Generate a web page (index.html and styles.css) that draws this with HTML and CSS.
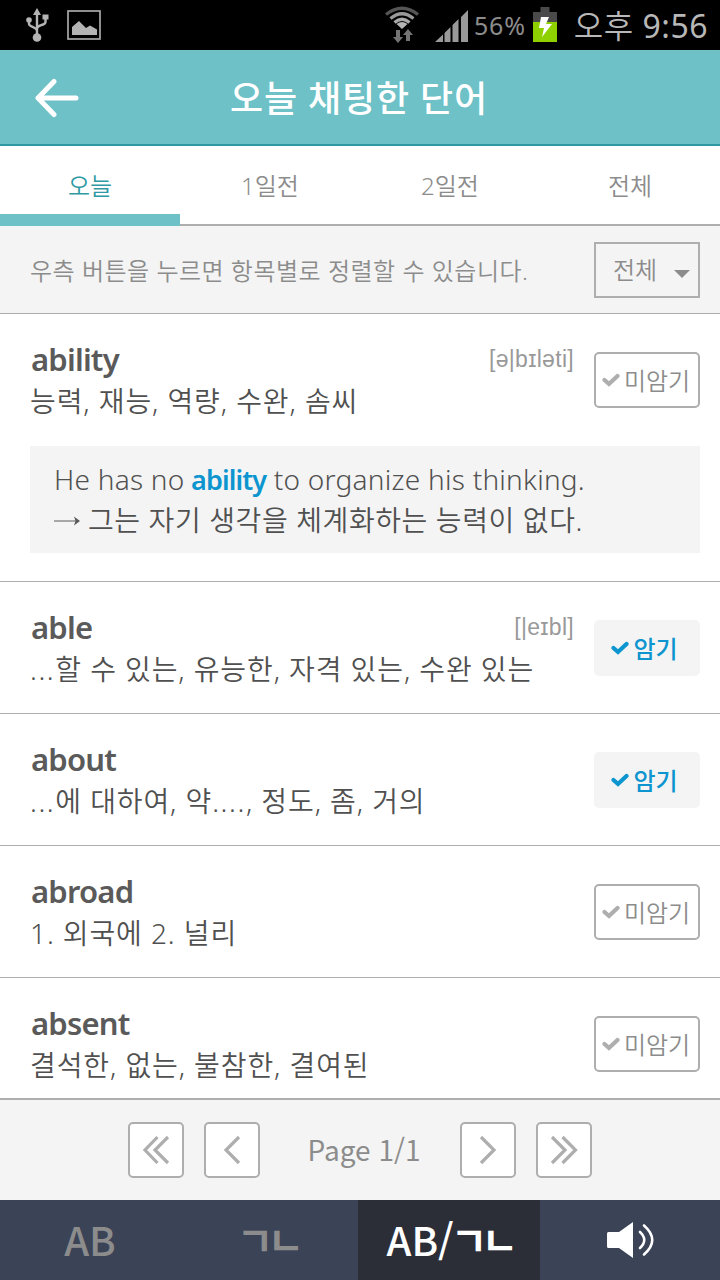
FILE: index.html
```html
<!DOCTYPE html>
<html lang="ko">
<head>
    <meta charset="UTF-8">
    <title>오늘 채팅한 단어</title>
    <link rel="stylesheet" href="styles.css">
</head>
<body>
    <svg class="defs" width="0" height="0">
        <symbol id="check" viewBox="0 0 18 14">
            <path d="M2.5 7 L7 11 L15.5 3" fill="none" stroke="currentColor" stroke-width="4.2" stroke-linecap="round"/>
        </symbol>
    </svg>

    <div class="status-bar">
        <svg class="usb" width="24" height="36" viewBox="0 0 24 36">
            <g fill="none" stroke="#b4b4b4" stroke-width="2.400">
                <path d="M12 6v24M4 13v4c0 3 8 3 8 7M20.500 11v4c0 4-8.500 2-8.500 7"/>
            </g>
            <path d="M12 1l4 7H8zM17.500 7.500h6v5h-6z" fill="#b4b4b4"/>
            <circle cx="4" cy="13" r="2.800" fill="#b4b4b4"/>
            <circle cx="12" cy="30.500" r="4.300" fill="#b4b4b4"/>
        </svg>
        <svg class="photo" width="34" height="30" viewBox="0 0 34 30">
            <rect x="1" y="1" width="32" height="28" fill="none" stroke="#a8a8a8" stroke-width="1.700"/>
            <path d="M5 25V17l7-6 7 7 4-2.500 7 4V25z" fill="#b4b4b4"/>
        </svg>
        <svg class="wifi" width="36" height="38" viewBox="0 0 36 38">
            <g fill="none" stroke-width="3.200">
                <path d="M2 8.500Q18-4 34 8.500" stroke="#555"/>
                <path d="M6.500 12.500Q18 3 29.500 12.500" stroke="#999"/>
                <path d="M10.500 16.500Q18 10 25.500 16.500" stroke="#aaa"/>
            </g>
            <path d="M12.500 18q5.500-4 11 0L18 23z" fill="#b4b4b4"/>
            <path d="M12 24h4v7h3l-5 6-5-6h3zM22 35h4v-6h3l-5-6-5 6h3z" fill="#747474"/>
        </svg>
        <svg class="signal" width="33" height="32" viewBox="0 0 33 32">
            <path d="M0 32L8 24.500V32zM9.500 23L15.500 17V32h-6zM17.500 15L23.500 9V32h-6zM26 7L33 0V32h-7z" fill="#999"/>
        </svg>
        <span class="percent">56%</span>
        <svg class="battery" width="24" height="36" viewBox="0 0 24 36">
            <path d="M7.500 0h9v5H24v11H0V5h7.500z" fill="#4a4a4a"/>
            <path d="M0 15h24v20H0z" fill="#8fd000"/>
            <path d="M8 10h8l-3 7h6L9 30l2-9H6z" fill="#fff"/>
        </svg>
        <span class="clock">오후 <span>9:56</span></span>
    </div>

    <header class="header">
        <svg class="back" width="44" height="40" viewBox="0 0 44 40">
            <path d="M19 3.500L3 20l16 16.500M4 20h37" fill="none" stroke="#fff" stroke-width="5" stroke-linecap="round" stroke-linejoin="round"/>
        </svg>
        <h1>오늘 채팅한 단어</h1>
    </header>

    <nav class="tabs">
        <a class="tab active">오늘</a>
        <a class="tab">1일전</a>
        <a class="tab">2일전</a>
        <a class="tab">전체</a>
    </nav>

    <div class="filter">
        <p>우측 버튼을 누르면 항목별로 정렬할 수 있습니다.</p>
        <div class="select">전체<span class="caret"></span></div>
    </div>

    <main class="list">
        <section class="item">
            <div class="row">
                <div class="text">
                    <div class="title"><h2>ability</h2><span class="phonetic">[ə|bɪləti]</span></div>
                    <p class="mean">능력, 재능, 역량, 수완, 솜씨</p>
                </div>
                <button class="memo"><svg width="18" height="14"><use href="#check"/></svg>미암기</button>
            </div>
            <div class="example">
                <p class="en">He has no <b>ability</b> to organize his thinking.</p>
                <p class="ko"><svg class="arrow" width="26" height="12" viewBox="0 0 26 12"><path d="M0 6h23" stroke="#5a5a5a" stroke-width="1"/><path d="M20 1.500L26 6l-6 4.500 1.500-4.500z" fill="#5a5a5a"/></svg>그는 자기 생각을 체계화하는 능력이 없다.</p>
            </div>
        </section>
        <section class="item">
            <div class="row">
                <div class="text">
                    <div class="title"><h2>able</h2><span class="phonetic">[|eɪbl]</span></div>
                    <p class="mean"><span class="dots">...</span>할 수 있는, 유능한, 자격 있는, 수완 있는</p>
                </div>
                <button class="memo done"><svg width="18" height="14"><use href="#check"/></svg>암기</button>
            </div>
        </section>
        <section class="item">
            <div class="row">
                <div class="text">
                    <div class="title"><h2>about</h2></div>
                    <p class="mean"><span class="dots">...</span>에 대하여, 약<span class="dots">....</span>, 정도, 좀, 거의</p>
                </div>
                <button class="memo done"><svg width="18" height="14"><use href="#check"/></svg>암기</button>
            </div>
        </section>
        <section class="item">
            <div class="row">
                <div class="text">
                    <div class="title"><h2>abroad</h2></div>
                    <p class="mean">1. 외국에 2. 널리</p>
                </div>
                <button class="memo"><svg width="18" height="14"><use href="#check"/></svg>미암기</button>
            </div>
        </section>
        <section class="item">
            <div class="row">
                <div class="text">
                    <div class="title"><h2>absent</h2></div>
                    <p class="mean">결석한, 없는, 불참한, 결여된</p>
                </div>
                <button class="memo"><svg width="18" height="14"><use href="#check"/></svg>미암기</button>
            </div>
        </section>
    </main>

    <div class="pager">
        <button><svg width="30" height="30" viewBox="0 0 30 30"><path d="M16.500 2L4 15l12.500 13M27 2L14 15l13 13"/></svg></button>
        <button><svg width="30" height="30" viewBox="0 0 30 30"><path d="M22 2L9 15l13 13"/></svg></button>
        <span class="page">Page 1/1</span>
        <button><svg width="30" height="30" viewBox="0 0 30 30"><path d="M8 2l13 13L8 28"/></svg></button>
        <button><svg width="30" height="30" viewBox="0 0 30 30"><path d="M3 2l13 13L3 28M13.500 2l13 13-13 13"/></svg></button>
    </div>

    <nav class="modes">
        <a>AB</a>
        <a><span class="jamo">ㄱㄴ</span></a>
        <a class="on">AB/<span class="jamo">ㄱㄴ</span></a>
        <a>
            <svg width="48" height="38" viewBox="0 0 48 38">
                <path d="M1.500 11H12L26 1v36L12 27H1.500Q0 27 0 25.500v-13Q0 11 1.500 11z" fill="#fff"/>
                <path d="M33 11q8.500 8 0 16M37 4.500q16.500 14.500 0 29" fill="none" stroke="#fff" stroke-width="2.600" stroke-linecap="round"/>
            </svg>
        </a>
    </nav>
</body>
</html>
```
FILE: styles.css
```css
* {
    box-sizing: border-box;
    margin: 0;
    padding: 0;
}
body {
    width: 720px;
    height: 1280px;
    overflow: hidden;
    display: flex;
    flex-direction: column;
    font-family: "Noto Sans", "Noto Sans CJK KR", sans-serif;
    font-weight: 350;
    background: #fff;
    color: #505050;
}
.defs {
    display: none;
}
button {
    font: inherit;
    background: #fff;
    border: 2px solid #aeaeae;
    border-radius: 5px;
}
/* 상태바 */
.status-bar {
    height: 50px;
    flex: none;
    display: flex;
    align-items: center;
    padding: 0 12px 0 25px;
    background: #000;
    color: #b8b8b8;
}
.photo {
    margin-left: 18px;
}
.wifi {
    margin-left: 283px;
}
.signal {
    margin-left: 15px;
    margin-top: 2px;
}
.percent {
    width: 53px;
    margin-left: 6px;
    font-size: 25px;
    font-weight: 400;
    letter-spacing: 0.8px;
    color: #8c8c8c;
}
.battery {
    margin-left: 6px;
}
.clock {
    margin-left: auto;
    padding-bottom: 3px;
    font-size: 32px;
    letter-spacing: 0.5px;
    white-space: nowrap;
}
.clock span {
    font-weight: 400;
}
/* 헤더 */
.header {
    height: 96px;
    flex: none;
    display: flex;
    align-items: center;
    padding: 2px 35px 0;
    background: #6dc1c7;
    border-bottom: 2px solid #2f9aa3;
    color: #fff;
}
.header h1 {
    flex: 1;
    margin-right: 46px;
    text-align: center;
    font-size: 36px;
    font-weight: 500;
    letter-spacing: 0.8px;
    line-height: 92px;
    padding-top: 2px;
}
.tabs {
    height: 80px;
    flex: none;
    display: flex;
}
.tab {
    flex: 1;
    border-bottom: 2px solid #aeaeae;
    text-align: center;
    font-size: 24px;
    line-height: 80px;
    color: #8c8c8c;
}
.tab.active {
    border-bottom: 12px solid #6dc1c7;
    color: #2f9aa3;
}
.filter {
    height: 88px;
    flex: none;
    display: flex;
    align-items: center;
    justify-content: space-between;
    padding: 0 20px 0 30px;
    background: #f4f4f4;
    border-bottom: 1px solid #aeaeae;
    font-size: 24px;
    color: #8c8c8c;
}
.filter p {
    letter-spacing: 0.5px;
}
.select {
    width: 106px;
    height: 56px;
    display: flex;
    align-items: center;
    justify-content: space-between;
    padding: 0 8px 0 17px;
    border: 2px solid #aeaeae;
    line-height: 52px;
}
.caret {
    margin-top: 8px;
    border: 8px solid transparent;
    border-top-color: #8c8c8c;
    border-bottom: 0;
}
/* 단어 목록 */
.list {
    flex: 1;
    min-height: 0;
    overflow: hidden;
}
.item {
    min-height: 132px;
    padding: 24px 20px 0 30px;
    border-bottom: 1px solid #aeaeae;
}
.row {
    display: flex;
}
.text {
    flex: 1;
    white-space: nowrap;
}
.title {
    display: flex;
    justify-content: space-between;
    height: 41px;
    line-height: 43px;
}
.title h2 {
    padding-left: 1px;
    font-size: 31px;
    font-weight: 600;
    letter-spacing: -0.8px;
    color: #5a5a5a;
}
.phonetic {
    font-family: "Liberation Sans", sans-serif;
    font-weight: 400;
    font-size: 23px;
    letter-spacing: 0.3px;
    line-height: 43px;
    color: #999;
}
.mean {
    font-size: 28px;
    line-height: 44px;
    letter-spacing: 0.9px;
}
.dots {
    letter-spacing: 1.6px;
}
.memo {
    width: 106px;
    height: 56px;
    flex: none;
    display: flex;
    align-items: center;
    justify-content: center;
    gap: 4px;
    margin: 14px 0 0 20px;
    padding: 0 2px 2px 0;
    font-size: 24px;
    color: #8c8c8c;
}
.memo svg {
    color: #aeaeae;
    margin-top: 2px;
}
.memo.done {
    padding-right: 5px;
    background: #f4f4f4;
    border-color: #f4f4f4;
    color: #0c95cf;
    font-weight: 500;
}
.memo.done svg {
    color: #0c95cf;
}
.example {
    height: 107px;
    margin: 23px 0 28px;
    padding: 13px 24px;
    background: #f4f4f4;
    font-size: 28px;
    line-height: 41px;
    white-space: nowrap;
}
.en {
    letter-spacing: 0.25px;
}
.ko {
    letter-spacing: 0.6px;
}
.example b {
    margin-left: -1px;
    font-size: 27px;
    font-weight: 600;
    line-height: 1;
    letter-spacing: -0.9px;
    color: #0c95cf;
}
.arrow {
    margin-right: 8px;
    vertical-align: 4px;
}
/* 하단 */
.pager {
    height: 102px;
    flex: none;
    display: flex;
    align-items: center;
    justify-content: center;
    gap: 20px;
    background: #f4f4f4;
    border-top: 2px solid #aeaeae;
}
.pager button {
    width: 56px;
    height: 56px;
    display: flex;
    align-items: center;
    justify-content: center;
}
.pager path {
    fill: none;
    stroke: #aeaeae;
    stroke-width: 3.2;
}
.page {
    width: 160px;
    margin-left: 4px;
    margin-right: -4px;
    padding-bottom: 2px;
    text-align: center;
    font-family: "Noto Sans CJK KR", sans-serif;
    font-size: 28px;
    font-weight: 400;
    color: #8c8c8c;
}
.modes {
    height: 80px;
    flex: none;
    display: grid;
    grid-template-columns: 179px 179px 182px 180px;
    background: #3b4357;
    color: #8c8c8c;
    font-family: "Noto Sans CJK KR", sans-serif;
    font-size: 40px;
    font-weight: 500;
    line-height: 78px;
}
.modes a {
    height: 78px;
    padding-left: 1px;
    display: flex;
    align-items: center;
    justify-content: center;
    white-space: nowrap;
}
.modes .on {
    height: 80px;
    padding-bottom: 2px;
    background: #2b2d37;
    color: #fff;
}
.modes svg {
    margin-top: 2px;
}
.jamo {
    margin-left: -3px;
    font-size: 40px;
    font-weight: 700;
    letter-spacing: -6px;
}
```
